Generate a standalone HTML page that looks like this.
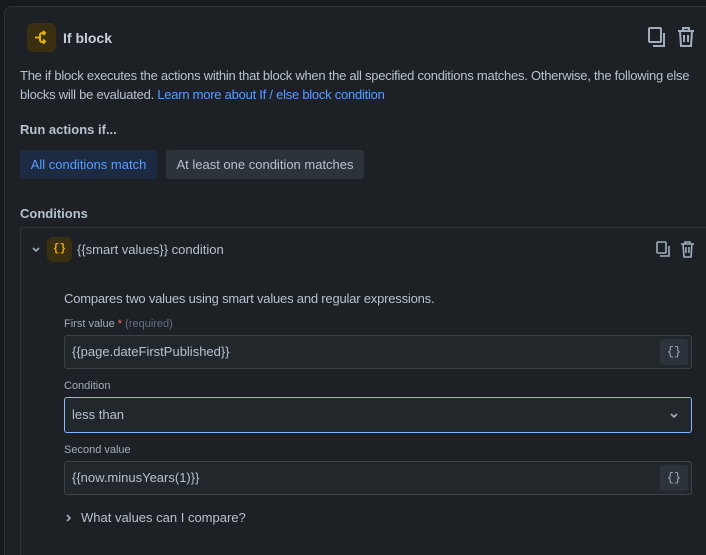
<!DOCTYPE html>
<html style="width:706px;height:555px;overflow:hidden"><head><style>
*{box-sizing:border-box;margin:0;padding:0}
body{width:706px;height:555px;background:#161a1d;font-family:"Liberation Sans",sans-serif;color:#b6c2cf;overflow:hidden;position:relative;font-size:13px}
.card{position:absolute;left:4px;top:6px;width:720px;height:560px;background:#1d2125;border:1px solid #2c333a;border-radius:8px}
.abs{position:absolute;white-space:nowrap}
.ico{position:absolute;background:#3a2f10;border-radius:6px}
.btn{position:absolute;height:29px;border-radius:3px;font-size:13px;line-height:29px;text-align:center}
.inp{position:absolute;left:64px;width:628px;height:34px;background:#22272b;border:1px solid #3a4148;border-radius:3px;font-size:13px;color:#b6c2cf;line-height:32px;padding-left:7px}
.br{position:absolute;right:3px;top:3px;width:28px;height:26px;background:#2c333a;border-radius:3px;color:#9fadbc;text-align:center;line-height:26px;font-size:12px;font-family:"Liberation Mono",monospace}
.lbl{position:absolute;left:64px;font-size:11px;color:#9fadbc}
</style></head><body>
<div class="card"></div>
<div class="ico" style="left:27px;top:23px;width:29px;height:29px"><svg width="29" height="29" viewBox="0 0 29 29"><path d="M8 14.5h5M13 14.5v-2.5a2 2 0 0 1 2-2h3M13 14.5v2.5a2 2 0 0 0 2 2h3M16 8l2 2-2 2M16 16.5l2 2-2 2" stroke="#e2b203" stroke-width="2" fill="none"/></svg></div>
<div class="abs" style="left:63px;top:30px;font-size:14px;font-weight:bold;color:#c7d1db">If block</div>
<svg class="abs" style="left:647px;top:26px" width="52" height="22" viewBox="0 0 52 22"><rect x="2" y="2" width="12" height="14" rx="1" fill="none" stroke="#9fadbc" stroke-width="2"/><path d="M6 20h11V7" stroke="#9fadbc" stroke-width="2" fill="none"/><path d="M31 5h16M36 5V2h6v3M33 5l1 15h10l1-15M37 9v7M41 9v7" stroke="#9fadbc" stroke-width="2" fill="none"/></svg>
<div class="abs" style="left:20px;top:66px;font-size:13px;line-height:19px;color:#b6c2cf;white-space:normal;width:684px;letter-spacing:-0.25px">The if block executes the actions within that block when the all specified conditions matches. Otherwise, the following else blocks will be evaluated. <span style="color:#579dff">Learn more about If / else block condition</span></div>
<div class="abs" style="left:20px;top:122px;font-weight:bold;color:#b6c2cf">Run actions if...</div>
<div class="btn" style="left:20px;top:150px;width:137px;background:#1c2b41;color:#579dff">All conditions match</div>
<div class="btn" style="left:166px;top:150px;width:198px;background:#2c333a;color:#b6c2cf">At least one condition matches</div>
<div class="abs" style="left:20px;top:206px;font-weight:bold;color:#b6c2cf">Conditions</div>
<div style="position:absolute;left:20px;top:227px;width:700px;height:340px;border:1px solid #2c333a;border-radius:4px;background:#1d2125"></div>
<svg class="abs" style="left:31px;top:245px" width="10" height="10"><path d="M2 3l3 3 3-3" stroke="#9fadbc" stroke-width="1.6" fill="none"/></svg>
<div class="ico" style="left:47px;top:237px;width:25px;height:25px;color:#e2b203;font-size:11px;text-align:center;line-height:25px;font-family:'Liberation Mono',monospace;font-weight:bold">{}</div>
<div class="abs" style="left:77px;top:242px;color:#b6c2cf">{{smart values}} condition</div>
<svg class="abs" style="left:655px;top:240px" width="42" height="19" viewBox="0 0 42 19"><rect x="2" y="2" width="9" height="11" rx="1" fill="none" stroke="#9fadbc" stroke-width="1.6"/><path d="M5 16h9V6" stroke="#9fadbc" stroke-width="1.6" fill="none"/><path d="M26 4h13M30 4V2h5v2M28 4l1 13h7l1-13M31 7v6M34 7v6" stroke="#9fadbc" stroke-width="1.6" fill="none"/></svg>
<div class="abs" style="left:64px;top:291px;color:#b6c2cf;letter-spacing:-0.2px">Compares two values using smart values and regular expressions.</div>
<div class="lbl" style="top:318px">First value <span style="color:#f87168">*</span> <span style="color:#626f86">(required)</span></div>
<div class="inp" style="top:335px">{{page.dateFirstPublished}}<div class="br">{}</div></div>
<div class="lbl" style="top:380px">Condition</div>
<div class="inp" style="top:397px;height:36px;border-color:#85b8ff;line-height:34px">less than<svg style="position:absolute;right:12px;top:13px" width="10" height="10"><path d="M2 3l3 3 3-3" stroke="#9fadbc" stroke-width="1.6" fill="none"/></svg></div>
<div class="lbl" style="top:444px">Second value</div>
<div class="inp" style="top:461px">{{now.minusYears(1)}}<div class="br">{}</div></div>
<svg class="abs" style="left:64px;top:513px" width="10" height="10"><path d="M3 2l3 3-3 3" stroke="#9fadbc" stroke-width="1.6" fill="none"/></svg>
<div class="abs" style="left:81px;top:510px;color:#b6c2cf">What values can I compare?</div>
</body></html>
